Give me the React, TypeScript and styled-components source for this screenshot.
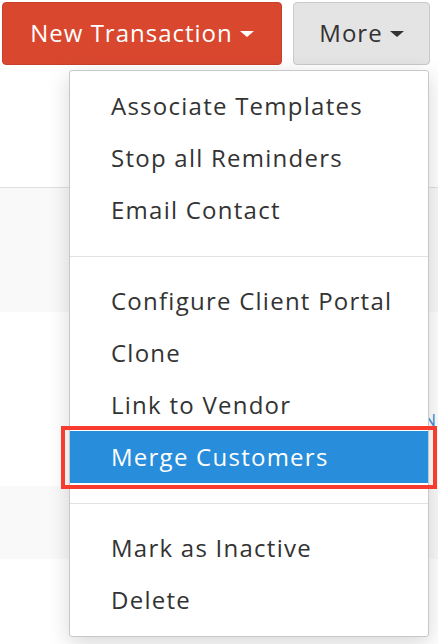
import React from "react";
import styled, { createGlobalStyle } from "styled-components";

const GlobalStyle = createGlobalStyle`
  html, body {
    margin: 0;
    padding: 0;
    background: #fff;
  }
  body {
    font-family: "Open Sans", "Liberation Sans", sans-serif;
  }
`;

const Page = styled.div`
  position: relative;
  width: 438px;
  height: 644px;
  overflow: hidden;
  background: #fff;
`;

const Header = styled.div`
  box-sizing: border-box;
  height: 188px;
  padding: 2px 0 0 2px;
  border-bottom: 1px solid #dedede;
  display: flex;
  align-items: flex-start;
  gap: 11px;
`;

const Band = styled.div<{ $h: number; $grey?: boolean }>`
  height: ${(p) => p.$h}px;
  background: ${(p) => (p.$grey ? "#f9f9f9" : "#fff")};
  display: flex;
  justify-content: flex-end;
  align-items: flex-start;
`;

// link in the row behind the menu, only its right edge peeks out
const PeekLink = styled.span`
  margin: 97px 2px 0 0;
  font-size: 17px;
  line-height: 22px;
  color: #3f8ed6;
`;

const Button = styled.button<{ $primary?: boolean; $w: number }>`
  box-sizing: border-box;
  width: ${(p) => p.$w}px;
  height: 63px;
  display: flex;
  align-items: center;
  justify-content: center;
  gap: 7px;
  padding: 0 0 2px;
  border-radius: 4px;
  font-family: inherit;
  font-size: 24px;
  letter-spacing: 1px;
  cursor: pointer;
  background: ${(p) => (p.$primary ? "#d9472f" : "#e4e4e4")};
  color: ${(p) => (p.$primary ? "#fff" : "#333")};
  border: 1px solid ${(p) => (p.$primary ? "#c9402a" : "#c9c9c9")};
`;

const Caret = styled.span`
  width: 0;
  height: 0;
  margin-top: 2px;
  border-left: 7px solid transparent;
  border-right: 7px solid transparent;
  border-top: 6px solid currentColor;
`;

const Menu = styled.div`
  position: absolute;
  left: 69px;
  top: 70px;
  width: 360px;
  box-sizing: border-box;
  padding: 9px 0 10px;
  background: #fff;
  border: 1px solid #c8c8c8;
  border-radius: 3px;
  box-shadow: 0 6px 22px rgba(0, 0, 0, 0.16);
`;

const Divider = styled.div`
  height: 1px;
  margin: 20px 0 18px;
  background: #e2e2e2;
`;

const Item = styled.div<{ $active?: boolean }>`
  position: relative;
  height: 52px;
  line-height: 52px;
  padding-left: 41px;
  font-size: 24px;
  letter-spacing: 1.25px;
  color: ${(p) => (p.$active ? "#fff" : "#333")};
  background: ${(p) => (p.$active ? "#288ddb" : "transparent")};

  ${(p) =>
    p.$active &&
    `
    &::after {
      content: "";
      position: absolute;
      top: -5px;
      bottom: -6px;
      left: -9px;
      right: -9px;
      border: 4px solid #f73b2e;
    }
  `}
`;

const sections = [
  ["Associate Templates", "Stop all Reminders", "Email Contact"],
  ["Configure Client Portal", "Clone", "Link to Vendor", "Merge Customers"],
  ["Mark as Inactive", "Delete"],
];

export default function App() {
  return (
    <Page>
      <GlobalStyle />
      <Header>
        <Button $primary $w={280}>
          New Transaction
          <Caret />
        </Button>
        <Button $w={137}>
          More
          <Caret />
        </Button>
      </Header>
      <Band $h={124} $grey />
      <Band $h={174}>
        <PeekLink>N</PeekLink>
      </Band>
      <Band $h={73} $grey />
      <Band $h={85} />

      <Menu>
        {sections.map((items, i) => (
          <React.Fragment key={i}>
            {i > 0 && <Divider />}
            {items.map((label) => (
              <Item key={label} $active={label === "Merge Customers"}>
                {label}
              </Item>
            ))}
          </React.Fragment>
        ))}
      </Menu>
    </Page>
  );
}
